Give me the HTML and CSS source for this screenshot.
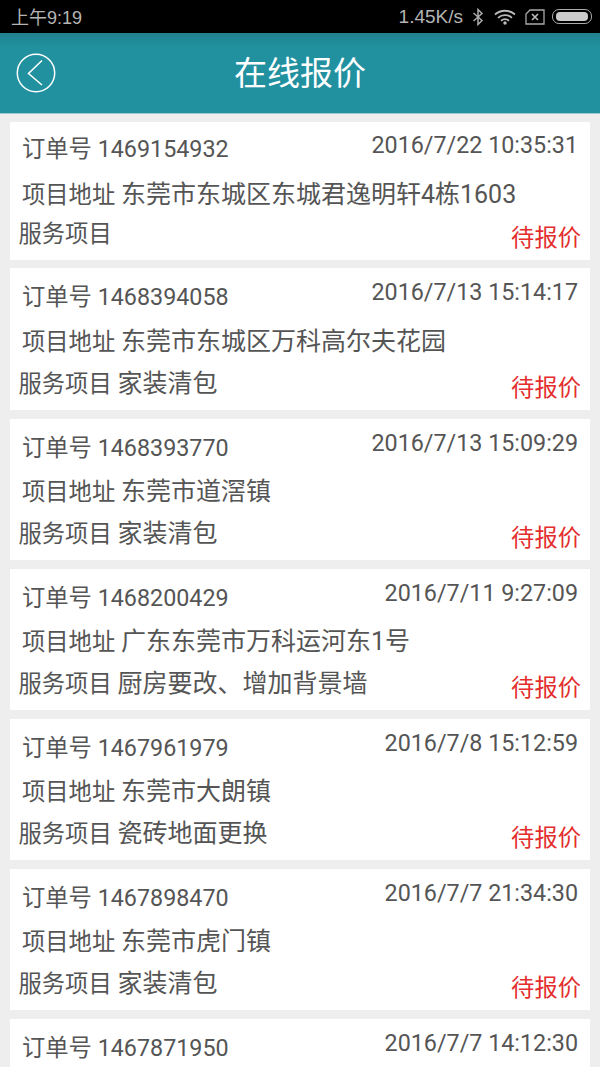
FILE: index.html
```html
<!DOCTYPE html>
<html lang="zh-CN">
<head>
    <meta charset="UTF-8">
    <title>在线报价</title>
    <meta name="viewport" content="width=device-width, initial-scale=1">
    <link rel="stylesheet" href="styles.css">
</head>
<body>
    <div class="statusbar">
        <span class="clock">上午9:19</span>
        <div class="status-right">
            <span class="speed">1.45K/s</span>
            <svg class="ic-bt" width="12" height="18" viewBox="0 0 12 18"><path d="M1.5 5 L10 12.5 L6 16.5 V1.5 L10 5.5 L1.5 13" fill="none" stroke="#aaa" stroke-width="1.5"/></svg>
            <svg class="ic-wifi" width="22" height="16" viewBox="0 0 22 16"><path d="M1 5.5 C6.5 0.5 15.5 0.5 21 5.5 M4 8.8 C8 5.2 14 5.2 18 8.8 M7 11.8 C9.4 9.8 12.6 9.8 15 11.8" fill="none" stroke="#bbb" stroke-width="1.8"/><circle cx="11" cy="14" r="1.7" fill="#bbb"/></svg>
            <svg class="ic-sim" width="20" height="16" viewBox="0 0 20 16"><path d="M5 1 H19 V15 H1 V5 Z" fill="none" stroke="#aaa" stroke-width="1.3"/><path d="M7 5 L13 11 M13 5 L7 11" stroke="#bbb" stroke-width="1.6"/></svg>
            <div class="battery"><div class="battery-fill"></div></div>
        </div>
    </div>
    <header class="topbar">
        <svg class="back" width="40" height="40" viewBox="0 0 40 40"><circle cx="20" cy="20" r="18.7" fill="none" stroke="#fff" stroke-width="1.5"/><path d="M26 7.5 L12.5 20.5 L26 32" fill="none" stroke="#fff" stroke-width="1.5"/></svg>
        <h1 class="title">在线报价</h1>
    </header>
    <div class="list">
        <div class="card first">
            <div class="row-top"><span>订单号 1469154932</span><span class="time">2016/7/22 10:35:31</span></div>
            <div class="row-addr">项目地址 <span class="value">东莞市东城区东城君逸明轩4栋1603</span></div>
            <div class="row-service"><span>服务项目</span><span class="state">待报价</span></div>
        </div>
        <div class="card second">
            <div class="row-top"><span>订单号 1468394058</span><span class="time">2016/7/13 15:14:17</span></div>
            <div class="row-addr">项目地址 <span class="value">东莞市东城区万科高尔夫花园</span></div>
            <div class="row-service"><span>服务项目 <span class="value">家装清包</span></span><span class="state">待报价</span></div>
        </div>
        <div class="card">
            <div class="row-top"><span>订单号 1468393770</span><span class="time">2016/7/13 15:09:29</span></div>
            <div class="row-addr">项目地址 <span class="value">东莞市道滘镇</span></div>
            <div class="row-service"><span>服务项目 <span class="value">家装清包</span></span><span class="state">待报价</span></div>
        </div>
        <div class="card">
            <div class="row-top"><span>订单号 1468200429</span><span class="time">2016/7/11 9:27:09</span></div>
            <div class="row-addr">项目地址 <span class="value">广东东莞市万科运河东1号</span></div>
            <div class="row-service"><span>服务项目 <span class="value">厨房要改、增加背景墙</span></span><span class="state">待报价</span></div>
        </div>
        <div class="card">
            <div class="row-top"><span>订单号 1467961979</span><span class="time">2016/7/8 15:12:59</span></div>
            <div class="row-addr">项目地址 <span class="value">东莞市大朗镇</span></div>
            <div class="row-service"><span>服务项目 <span class="value">瓷砖地面更换</span></span><span class="state">待报价</span></div>
        </div>
        <div class="card">
            <div class="row-top"><span>订单号 1467898470</span><span class="time">2016/7/7 21:34:30</span></div>
            <div class="row-addr">项目地址 <span class="value">东莞市虎门镇</span></div>
            <div class="row-service"><span>服务项目 <span class="value">家装清包</span></span><span class="state">待报价</span></div>
        </div>
        <div class="card">
            <div class="row-top"><span>订单号 1467871950</span><span class="time">2016/7/7 14:12:30</span></div>
        </div>
    </div>
</body>
</html>
```

FILE: styles.css
```css
html, body {
    height: 100%;
}

body {
    margin: 0;
    height: 1067px;
    overflow: hidden;
    background-color: #eeeeee;
    font-family: Roboto, "Noto Sans CJK SC", sans-serif;
    font-size: 23.3px;
    color: #555555;
}

/* Status bar */
.statusbar {
    display: flex;
    justify-content: space-between;
    align-items: center;
    height: 33px;
    padding: 0 8px 0 11px;
    background-color: #000000;
    color: #b4b4b4;
    font-family: "Liberation Sans", "Noto Sans CJK SC", sans-serif;
    font-size: 18px;
}

.clock {
    margin-top: -2px;
}

.status-right {
    display: flex;
    align-items: center;
}

.speed {
    font-size: 19px;
    margin-right: 9px;
}

.ic-bt {
    margin-right: 10px;
}

.ic-wifi {
    margin-right: 9px;
}

.ic-sim {
    margin-right: 7px;
}

.battery {
    box-sizing: border-box;
    width: 40px;
    height: 15px;
    padding: 2px 3px;
    border: 1px solid #aaaaaa;
    border-radius: 7px;
}

.battery-fill {
    height: 100%;
    background-color: #cccccc;
    border-radius: 4px;
}

/* Header */
.topbar {
    position: relative;
    display: flex;
    justify-content: center;
    align-items: center;
    box-sizing: border-box;
    height: 81px;
    padding-bottom: 4px;
    background: linear-gradient(#20808f, #21909f 16%, #21909f);
    border-bottom: 1px solid #9ccad2;
}

.back {
    position: absolute;
    left: 16px;
    top: 20px;
}

.title {
    margin: 0;
    font-size: 33px;
    font-weight: 400;
    color: #ffffff;
}

/* Order list */
.list {
    display: flex;
    flex-direction: column;
    gap: 9px;
    padding: 8px 10px 0;
}

.card {
    box-sizing: border-box;
    flex: none;
    height: 141px;
    padding: 12px 12px 0 12px;
    background-color: #ffffff;
}

.card.first {
    height: 138px;
    margin-bottom: -1px;
    padding-top: 10px;
}

.card.second {
    height: 142px;
}

.row-top {
    display: flex;
    justify-content: space-between;
    line-height: 34px;
}

.time {
    margin-top: -5px;
}

.first .time {
    margin-top: -4px;
}

.row-addr {
    margin-top: 10px;
    line-height: 34px;
}

.first .row-addr {
    margin-top: 12px;
}

.second .row-addr {
    margin-top: 11px;
}

.row-service {
    display: flex;
    justify-content: space-between;
    margin: 8px 0 0 -3.5px;
    line-height: 34px;
}

.first .row-service {
    margin-top: 5px;
}

.value {
    font-size: 25px;
}

.state {
    margin: 4px -3px 0 0;
    color: #e42d2d;
}
```
